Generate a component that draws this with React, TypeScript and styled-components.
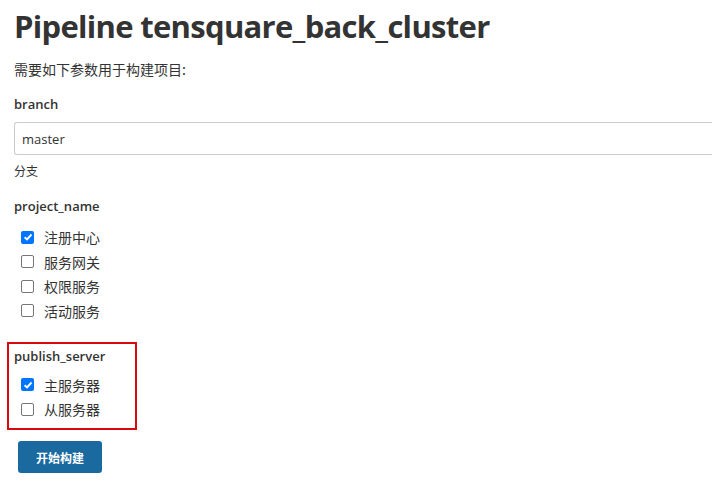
import React from "react";
import styled, { createGlobalStyle } from "styled-components";

const Global = createGlobalStyle`
  html, body { margin: 0; padding: 0; background: #fff; }
  body { font-family: "Open Sans", "Noto Sans CJK SC", sans-serif; color: #333; overflow: hidden; }
`;

const Page = styled.div`
  padding: 4px 0 0 14px;
  width: 712px;
  box-sizing: border-box;
`;

const Title = styled.h1`
  margin: 0;
  font-size: 31px;
  line-height: 44px;
  font-weight: 700;
  color: #333;
  letter-spacing: -0.7px;
`;

const Intro = styled.p`
  margin: 12px 0 0;
  font-size: 14px;
  line-height: 18px;
  font-family: "Noto Sans CJK SC", sans-serif;
`;

const Label = styled.div<{ $mt: number }>`
  font-size: 13px;
  font-weight: 600;
  line-height: 18px;
  margin-top: ${(p) => p.$mt}px;
`;

const Input = styled.input`
  display: block;
  margin-top: 9px;
  width: 710px;
  height: 33px;
  box-sizing: border-box;
  border: 1px solid #ccc;
  border-right: none;
  border-radius: 3px 0 0 3px;
  padding: 0 7px;
  font-family: "Open Sans", sans-serif;
  font-size: 13px;
  color: #333;
  outline: none;
`;

const Hint = styled.div`
  margin-top: 7px;
  font-size: 12px;
  line-height: 18px;
  font-family: "Noto Sans CJK SC", sans-serif;
`;

const List = styled.div<{ $mt: number }>`
  display: flex;
  flex-direction: column;
  gap: 6.5px;
  margin-top: ${(p) => p.$mt}px;
  padding-left: 7px;
`;

const Row = styled.label`
  display: flex;
  align-items: center;
  gap: 10px;
  height: 18px;
  font-size: 14px;
  font-family: "Noto Sans CJK SC", sans-serif;
  color: #333;
`;

const Box = styled.span<{ $on: boolean }>`
  width: 13px;
  height: 13px;
  box-sizing: border-box;
  border-radius: 2px;
  border: ${(p) => (p.$on ? "none" : "1px solid #767676")};
  background: ${(p) => (p.$on ? "#0075ff" : "#fff")};
  display: flex;
  align-items: center;
  justify-content: center;
`;

const Frame = styled.div`
  margin: 22px 0 0 -7px;
  width: 130px;
  box-sizing: border-box;
  border: 2px solid #d9080f;
  padding: 3px 5px 10px 5px;
`;

const Button = styled.button`
  margin: 11px 0 0 4px;
  width: 84px;
  height: 32px;
  border: none;
  border-radius: 3px;
  background: #1a6aa0;
  color: #fff;
  font-weight: 700;
  font-size: 12px;
  font-family: "Noto Sans CJK SC", sans-serif;
`;

const Check = ({ on }: { on: boolean }) => (
  <Box $on={on}>
    {on && (
      <svg width="10" height="10" viewBox="0 0 10 10">
        <path d="M1.6 5.2 L4 7.5 L8.5 2.5" stroke="#fff" strokeWidth="1.9" fill="none" />
      </svg>
    )}
  </Box>
);

const Item = ({ on, text }: { on: boolean; text: string }) => (
  <Row>
    <Check on={on} />
    <span>{text}</span>
  </Row>
);

export default function App() {
  return (
    <Page>
      <Global />
      <Title>Pipeline tensquare_back_cluster</Title>
      <Intro>需要如下参数用于构建项目:</Intro>
      <Label $mt={17}>branch</Label>
      <Input defaultValue="master" readOnly />
      <Hint>分支</Hint>
      <Label $mt={17}>project_name</Label>
      <List $mt={13}>
        <Item on text="注册中心" />
        <Item on={false} text="服务网关" />
        <Item on={false} text="权限服务" />
        <Item on={false} text="活动服务" />
      </List>
      <Frame>
        <Label $mt={0}>publish_server</Label>
        <List $mt={11}>
          <Item on text="主服务器" />
          <Item on={false} text="从服务器" />
        </List>
      </Frame>
      <Button>开始构建</Button>
    </Page>
  );
}
